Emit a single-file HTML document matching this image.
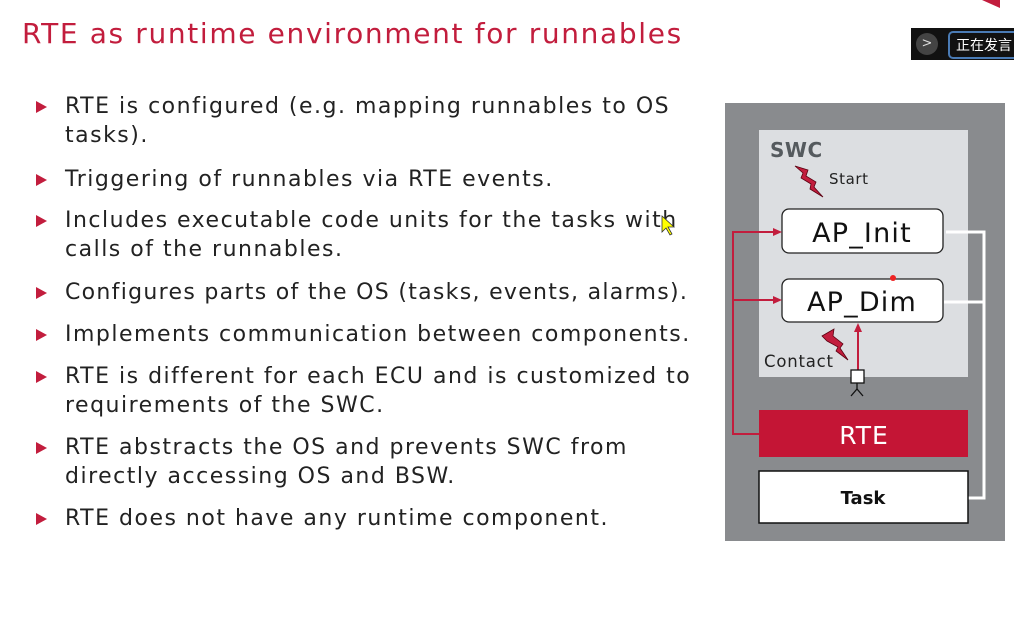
<!DOCTYPE html>
<html><head><meta charset="utf-8"><style>
body{margin:0;width:1014px;height:617px;background:#fff;position:relative;overflow:hidden;font-family:"DejaVu Sans","Liberation Sans",sans-serif;}
.t{position:absolute;left:22px;top:17px;font-size:28px;color:#c21d3d;letter-spacing:1.65px;white-space:nowrap}
.b{position:absolute;left:65px;font-size:22px;line-height:29px;color:#222;width:700px;letter-spacing:1.5px;white-space:nowrap}
.tri{position:absolute;left:36px;width:0;height:0;border-top:6px solid transparent;border-bottom:6px solid transparent;border-left:11px solid #c21d3d}
.a{position:absolute}
</style></head><body>
<div class="t">RTE as runtime environment for runnables</div>
<div class="tri" style="top:101px"></div><div class="b" style="top:92px">RTE is configured (e.g. mapping runnables to OS<br>tasks).</div>
<div class="tri" style="top:174px"></div><div class="b" style="top:165px">Triggering of runnables via RTE events.</div>
<div class="tri" style="top:215px"></div><div class="b" style="top:206px">Includes executable code units for the tasks with<br>calls of the runnables.</div>
<div class="tri" style="top:287px"></div><div class="b" style="top:278px;letter-spacing:1.3px">Configures parts of the OS (tasks, events, alarms).</div>
<div class="tri" style="top:329px"></div><div class="b" style="top:320px">Implements communication between components.</div>
<div class="tri" style="top:371px"></div><div class="b" style="top:362px">RTE is different for each ECU and is customized to<br>requirements of the SWC.</div>
<div class="tri" style="top:442px"></div><div class="b" style="top:433px">RTE abstracts the OS and prevents SWC from<br>directly accessing OS and BSW.</div>
<div class="tri" style="top:513px"></div><div class="b" style="top:504px">RTE does not have any runtime component.</div>

<div class="a" style="left:911px;top:28px;width:103px;height:32px;background:#111"></div>
<div class="a" style="left:916px;top:33px;width:22px;height:22px;border-radius:50%;background:#444;color:#ddd;font-size:13px;text-align:center;line-height:22px">&gt;</div>
<div class="a" style="left:948px;top:31px;width:70px;height:24px;border:2px solid #4a7bb5;border-radius:5px;color:#fff;font-family:'Noto Sans CJK SC',sans-serif;font-size:14px;line-height:24px;padding-left:6px">正在发言</div>
<div class="a" style="left:982px;top:0;width:0;height:0;border-top:8px solid #c21d3d;border-left:18px solid transparent"></div>

<svg class="a" style="left:0;top:0" width="1014" height="617">
<rect x="725" y="103" width="280" height="438" fill="#898b8e"/>
<rect x="759" y="130" width="209" height="247" fill="#dcdee1"/>
<text x="770" y="157" font-family="DejaVu Sans" font-weight="bold" font-size="20" letter-spacing="0.5" fill="#555a5e">SWC</text>
<text x="829" y="184" font-family="DejaVu Sans" font-size="15" letter-spacing="0.6" fill="#222">Start</text>
<polygon points="795,166 808,170 806,176 816,182 814,187 823,197 810,189 811,184 801,178 803,173" fill="#c21d3d" stroke="#5a0010" stroke-width="0.8"/>
<polyline points="946,232 984,232 984,498 968,498" fill="none" stroke="#fff" stroke-width="3"/>
<line x1="944" y1="302" x2="984" y2="302" stroke="#fff" stroke-width="3"/>
<rect x="782" y="209" width="161" height="44" rx="7" fill="#fff" stroke="#222" stroke-width="1.3"/>
<text x="862" y="242" text-anchor="middle" font-family="DejaVu Sans" font-size="27" letter-spacing="1.2" fill="#111">AP_Init</text>
<rect x="782" y="279" width="161" height="43" rx="7" fill="#fff" stroke="#222" stroke-width="1.3"/>
<text x="862" y="311" text-anchor="middle" font-family="DejaVu Sans" font-size="27" letter-spacing="1.2" fill="#111">AP_Dim</text>
<circle cx="893" cy="278" r="3" fill="#e22"/>
<polyline points="759,434 733,434 733,232 776,232" fill="none" stroke="#c21d3d" stroke-width="2"/>
<line x1="733" y1="300" x2="776" y2="300" stroke="#c21d3d" stroke-width="2"/>
<polygon points="782,232 773,228 773,236" fill="#c21d3d"/>
<polygon points="782,300 773,296 773,304" fill="#c21d3d"/>
<line x1="858" y1="370" x2="858" y2="330" stroke="#c21d3d" stroke-width="2"/>
<polygon points="858,323 854,332 862,332" fill="#c21d3d"/>
<polygon points="822,336 834,329 833,336 843,344 840,348 848,360 836,351 838,347 827,341" fill="#c21d3d" stroke="#5a0010" stroke-width="0.8"/>
<text x="764" y="367" font-family="DejaVu Sans" font-size="16.5" letter-spacing="0.8" fill="#222">Contact</text>
<rect x="851" y="370" width="13" height="13" fill="#fff" stroke="#111" stroke-width="1.3"/>
<polyline points="851,396 857,389 863,396" fill="none" stroke="#111" stroke-width="1.3"/>
<line x1="857" y1="383" x2="857" y2="389" stroke="#111" stroke-width="1.3"/>
<rect x="759" y="410" width="209" height="47" fill="#c41535"/>
<text x="864" y="444" text-anchor="middle" font-family="DejaVu Sans" font-size="25" letter-spacing="1" fill="#fff">RTE</text>
<rect x="759" y="471" width="209" height="52" fill="#fff" stroke="#111" stroke-width="1.5"/>
<text x="863" y="504" text-anchor="middle" font-family="DejaVu Sans" font-weight="bold" font-size="18" fill="#111">Task</text>
<polygon points="662,216 662,232 666,228 670,235 672,234 668,227 674,227" fill="#ff0" stroke="#333" stroke-width="0.8"/>
</svg>
</body></html>
